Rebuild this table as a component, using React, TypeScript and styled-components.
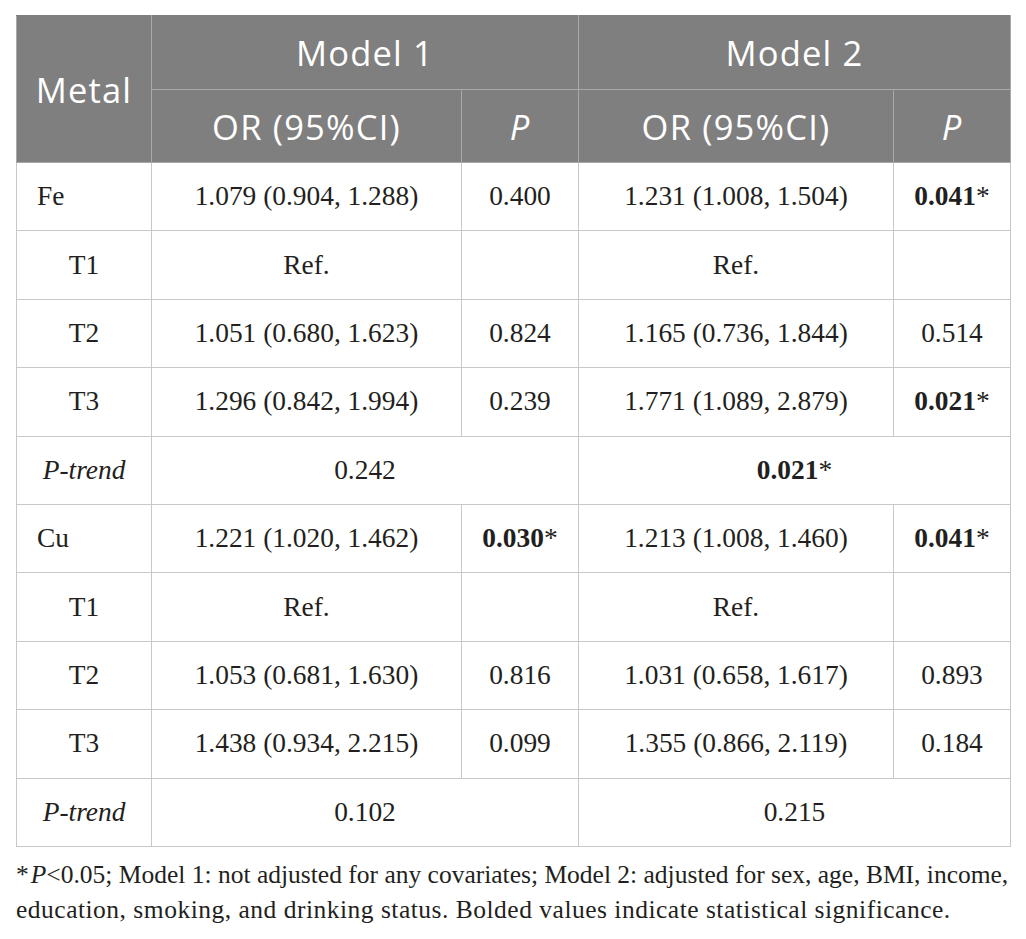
import styled, { createGlobalStyle } from 'styled-components'

const GlobalStyle = createGlobalStyle`
  html, body {
    margin: 0;
    padding: 0;
    background: #fff;
  }
`

const Page = styled.div`
  padding: 15px 16px 0 16px;
  width: 994px;
`

const Table = styled.table`
  width: 994px;
  border-collapse: collapse;
  table-layout: fixed;
  font-family: 'Liberation Serif', 'Times New Roman', serif;
  color: #231f20;
`

const HeadCell = styled.th<{ $h: number }>`
  height: ${(p) => p.$h}px;
  padding: 0;
  background: #7f7f7f;
  color: #fff;
  font-family: 'Open Sans', Lato, sans-serif;
  font-weight: 400;
  font-size: 34.5px;
  letter-spacing: 1.2px;
  text-align: center;
  border: 1px solid #a9a9a9;
  border-top-color: #7f7f7f;
`

const ItalicHead = styled.span`
  font-style: italic;
`

const Cell = styled.td<{ $left?: boolean }>`
  height: 67.4px;
  padding: 0 0 0 ${(p) => (p.$left ? '20px' : '0')};
  border: 1px solid #c8c8c8;
  font-size: 27.4px;
  text-align: ${(p) => (p.$left ? 'left' : 'center')};
  vertical-align: middle;
`

const Em = styled.span`
  font-style: italic;
`

const Sig = styled.span`
  font-weight: 700;
`

const Note = styled.div`
  margin-top: 10px;
  font-family: 'Liberation Serif', 'Times New Roman', serif;
  font-size: 25.5px;
  line-height: 35px;
  color: #231f20;
  white-space: nowrap;
`

const NoteLine = styled.div<{ $spacing: number }>`
  letter-spacing: ${(p) => p.$spacing}px;
`

const NoteP = styled.span`
  font-style: italic;
  margin-left: 2px;
`

type Val = string | { sig: string }

type Row = {
  label: string
  kind: 'metal' | 'tertile' | 'trend'
  m1: Val[]
  m2: Val[]
}

const rows: Row[] = [
  { label: 'Fe', kind: 'metal', m1: ['1.079 (0.904, 1.288)', '0.400'], m2: ['1.231 (1.008, 1.504)', { sig: '0.041' }] },
  { label: 'T1', kind: 'tertile', m1: ['Ref.', ''], m2: ['Ref.', ''] },
  { label: 'T2', kind: 'tertile', m1: ['1.051 (0.680, 1.623)', '0.824'], m2: ['1.165 (0.736, 1.844)', '0.514'] },
  { label: 'T3', kind: 'tertile', m1: ['1.296 (0.842, 1.994)', '0.239'], m2: ['1.771 (1.089, 2.879)', { sig: '0.021' }] },
  { label: 'P-trend', kind: 'trend', m1: ['0.242'], m2: [{ sig: '0.021' }] },
  { label: 'Cu', kind: 'metal', m1: ['1.221 (1.020, 1.462)', { sig: '0.030' }], m2: ['1.213 (1.008, 1.460)', { sig: '0.041' }] },
  { label: 'T1', kind: 'tertile', m1: ['Ref.', ''], m2: ['Ref.', ''] },
  { label: 'T2', kind: 'tertile', m1: ['1.053 (0.681, 1.630)', '0.816'], m2: ['1.031 (0.658, 1.617)', '0.893'] },
  { label: 'T3', kind: 'tertile', m1: ['1.438 (0.934, 2.215)', '0.099'], m2: ['1.355 (0.866, 2.119)', '0.184'] },
  { label: 'P-trend', kind: 'trend', m1: ['0.102'], m2: ['0.215'] },
]

const renderVal = (v: Val) =>
  typeof v === 'string' ? (
    v
  ) : (
    <>
      <Sig>{v.sig}</Sig>*
    </>
  )

const renderModel = (vals: Val[], key: string) =>
  vals.length === 1 ? (
    <Cell key={key} colSpan={2}>
      {renderVal(vals[0])}
    </Cell>
  ) : (
    vals.map((v, i) => <Cell key={key + i}>{renderVal(v)}</Cell>)
  )

export default function App() {
  return (
    <Page>
      <GlobalStyle />
      <Table>
        <colgroup>
          <col style={{ width: 135 }} />
          <col style={{ width: 310 }} />
          <col style={{ width: 117 }} />
          <col style={{ width: 315 }} />
          <col style={{ width: 117 }} />
        </colgroup>
        <thead>
          <tr>
            <HeadCell $h={73} rowSpan={2}>
              Metal
            </HeadCell>
            <HeadCell $h={73} colSpan={2}>
              Model 1
            </HeadCell>
            <HeadCell $h={73} colSpan={2}>
              Model 2
            </HeadCell>
          </tr>
          <tr>
            <HeadCell $h={72}>OR (95%CI)</HeadCell>
            <HeadCell $h={72}>
              <ItalicHead>P</ItalicHead>
            </HeadCell>
            <HeadCell $h={72}>OR (95%CI)</HeadCell>
            <HeadCell $h={72}>
              <ItalicHead>P</ItalicHead>
            </HeadCell>
          </tr>
        </thead>
        <tbody>
          {rows.map((r, i) => (
            <tr key={i}>
              <Cell $left={r.kind === 'metal'}>
                {r.kind === 'trend' ? <Em>{r.label}</Em> : r.label}
              </Cell>
              {renderModel(r.m1, 'a')}
              {renderModel(r.m2, 'b')}
            </tr>
          ))}
        </tbody>
      </Table>
      <Note>
        <NoteLine $spacing={0}>
          *<NoteP>P</NoteP>&lt;0.05; Model 1: not adjusted for any covariates; Model 2: adjusted for sex, age, BMI,
          income,
        </NoteLine>
        <NoteLine $spacing={0.5}>
          education, smoking, and drinking status. Bolded values indicate statistical significance.
        </NoteLine>
      </Note>
    </Page>
  )
}
